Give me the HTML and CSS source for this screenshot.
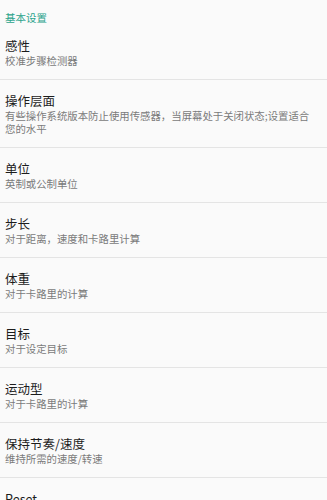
FILE: index.html
```html
<!DOCTYPE html>
<html lang="zh-CN">

<head>
	<meta charset="UTF-8" />
	<meta name="viewport" content="width=device-width,initial-scale=1" />
	<title>设置</title>
	<link rel="stylesheet" href="styles.css">
</head>

<body>
	<div class="settings">
		<div class="group-title">基本设置</div>

		<div class="pref">
			<div class="pref-title">感性</div>
			<div class="pref-summary">校准步骤检测器</div>
		</div>

		<div class="pref">
			<div class="pref-title">操作层面</div>
			<div class="pref-summary">有些操作系统版本防止使用传感器，当屏幕处于关闭状态;设置适合您的水平</div>
		</div>

		<div class="pref">
			<div class="pref-title">单位</div>
			<div class="pref-summary">英制或公制单位</div>
		</div>

		<div class="pref">
			<div class="pref-title">步长</div>
			<div class="pref-summary">对于距离，速度和卡路里计算</div>
		</div>

		<div class="pref">
			<div class="pref-title">体重</div>
			<div class="pref-summary">对于卡路里的计算</div>
		</div>

		<div class="pref">
			<div class="pref-title">目标</div>
			<div class="pref-summary">对于设定目标</div>
		</div>

		<div class="pref">
			<div class="pref-title">运动型</div>
			<div class="pref-summary">对于卡路里的计算</div>
		</div>

		<div class="pref">
			<div class="pref-title">保持节奏/速度</div>
			<div class="pref-summary">维持所需的速度/转速</div>
		</div>

		<div class="pref">
			<div class="pref-title">Reset</div>
		</div>
	</div>
</body>

</html>
```

FILE: styles.css
```css
* {
	box-sizing: border-box;
	margin: 0;
	padding: 0;
}

html,
body {
	background: #fafafa;
	font-family: 'Noto Sans CJK SC', 'Noto Sans', sans-serif;
	overflow: hidden;
}

.settings {
	display: flex;
	flex-direction: column;
}

.group-title {
	padding: 10px 5px 0;
	height: 25px;
	font-size: 10.5px;
	line-height: 15px;
	color: #2aa38b;
}

.pref {
	padding: 12px 14px 12px 5px;
	border-bottom: 1px solid #e4e4e4;
}

.pref:last-child {
	border-bottom: none;
}

.pref-title {
	font-size: 12.5px;
	line-height: 17px;
	color: #1c1c1c;
}

.pref-summary {
	font-size: 10.4px;
	line-height: 13px;
	color: #7a7a7a;
}
```
